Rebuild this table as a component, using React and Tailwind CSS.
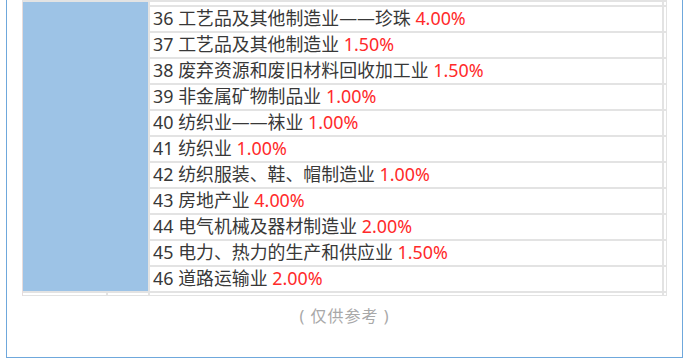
import React from "react";

const rows = [
  { no: 36, name: "工艺品及其他制造业——珍珠", rate: "4.00%" },
  { no: 37, name: "工艺品及其他制造业", rate: "1.50%" },
  { no: 38, name: "废弃资源和废旧材料回收加工业", rate: "1.50%" },
  { no: 39, name: "非金属矿物制品业", rate: "1.00%" },
  { no: 40, name: "纺织业——袜业", rate: "1.00%" },
  { no: 41, name: "纺织业", rate: "1.00%" },
  { no: 42, name: "纺织服装、鞋、帽制造业", rate: "1.00%" },
  { no: 43, name: "房地产业", rate: "4.00%" },
  { no: 44, name: "电气机械及器材制造业", rate: "2.00%" },
  { no: 45, name: "电力、热力的生产和供应业", rate: "1.50%" },
  { no: 46, name: "道路运输业", rate: "2.00%" },
];

const font = { fontFamily: '"Noto Sans", "Noto Sans CJK SC", sans-serif' };

const App = () => {
  return (
    <div className="w-[687px] h-[362px] bg-white overflow-hidden" style={font}>
      <div className="ml-[6px] w-[677px] h-[358px] border-x border-b border-[#6fa8dc]">
        <div className="ml-[15px] w-[645px] flex border-t-2 border-[#e3e3e3]">
          {/* merged blue cell */}
          <div className="w-[126px] flex flex-col border-l border-[#e6dcdc]">
            <div className="flex-1 bg-[#9dc3e6]" />
            <div className="h-[5px] flex border-t-2 border-b border-[#e3e3e3]">
              <div className="w-[85px] border-r-2 border-[#e3e3e3]" />
              <div className="flex-1" />
            </div>
          </div>

          {/* rows */}
          <div className="flex-1 flex flex-col border-l-2 border-[#e3e3e3]">
            <div className="h-[3px] flex">
              <div className="flex-1 border-r-2 border-[#e3e3e3]" />
              <div className="w-[3px] border-r border-[#e3e3e3]" />
            </div>
            {rows.map((r) => (
              <div key={r.no} className="h-[26px] flex border-t-2 border-[#e3e3e3]">
                <div className="flex-1 flex items-center pl-[3px] text-[17.9px] leading-none text-[#383838] whitespace-nowrap border-r-2 border-[#e3e3e3]">
                  <span>
                    {r.no} {r.name} <span className="text-[#ff2a2a]">{r.rate}</span>
                  </span>
                </div>
                <div className="w-[3px] border-r border-[#e3e3e3]" />
              </div>
            ))}
            <div className="h-[5px] flex border-t-2 border-b border-[#e3e3e3]">
              <div className="flex-1 border-r-2 border-[#e3e3e3]" />
              <div className="w-[3px] border-r border-[#e3e3e3]" />
            </div>
          </div>
        </div>

        <div className="mt-[8px] text-center text-[16px] leading-[24px] tracking-[1px] text-[#a8a8a8]">
          ( 仅供参考 )
        </div>
      </div>
    </div>
  );
};

export default App;
